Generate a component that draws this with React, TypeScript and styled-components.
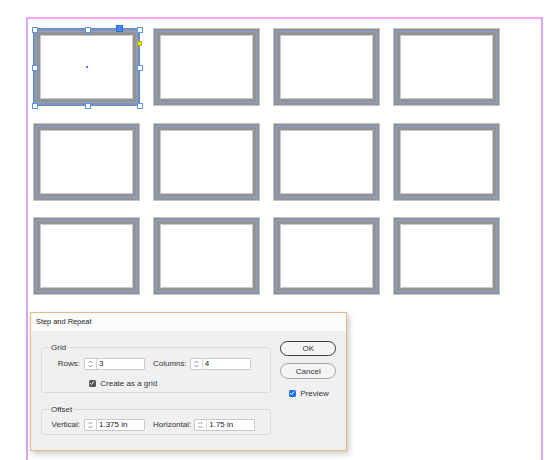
import styled, { createGlobalStyle } from "styled-components";

const GlobalStyle = createGlobalStyle`
  html, body {
    margin: 0;
    padding: 0;
    background: #ffffff;
    font-family: "Liberation Sans", Arial, sans-serif;
  }
`;

const Stage = styled.div`
  position: relative;
  width: 550px;
  height: 460px;
  overflow: hidden;
  background: #ffffff;
`;

const Page = styled.div`
  box-sizing: border-box;
  margin: 17px 0 0 26px;
  width: 517px;
  height: 443px;
  border-top: 2px solid #f9a2f9;
  border-left: 2px solid #d4a8f6;
  border-right: 2px solid #d4a8f6;
  padding: 9px 0 0 5px;
`;

const FrameGrid = styled.div`
  display: grid;
  grid-template-columns: repeat(4, 107px);
  grid-auto-rows: 78px;
  column-gap: 13px;
  row-gap: 16.5px;
`;

const Frame = styled.div<{ $selected?: boolean }>`
  position: relative;
  box-sizing: border-box;
  background: #939393;
  border: 1px solid ${(p) => (p.$selected ? "#4d8ef0" : "#c2c2c2")};
  padding: 2px;
`;

const Bleed = styled.div`
  box-sizing: border-box;
  height: 100%;
  border: 1px solid #7fa3da;
  padding: 3px;
`;

const Picture = styled.div`
  box-sizing: border-box;
  height: 100%;
  background: #ffffff;
  border: 1px solid #c8c8c8;
`;

const Handle = styled.span<{ $x: string; $y: string }>`
  position: absolute;
  left: ${(p) => p.$x};
  top: ${(p) => p.$y};
  width: 4px;
  height: 4px;
  margin: -3px 0 0 -3px;
  background: #ffffff;
  border: 1px solid #5a95ee;
`;

const AnchorHandle = styled.span`
  position: absolute;
  left: 82px;
  top: -4px;
  width: 5px;
  height: 5px;
  background: #3f86ee;
  border: 1px solid #2f6fd0;
`;

const CornerHandle = styled.span`
  position: absolute;
  right: -3px;
  top: 12px;
  width: 3px;
  height: 3px;
  background: #ffe400;
  border: 1px solid #b8a800;
`;

const CenterDot = styled.span`
  position: absolute;
  left: 52px;
  top: 37px;
  width: 2px;
  height: 2px;
  background: #3f86ee;
`;

const Dialog = styled.div`
  position: absolute;
  left: 30px;
  top: 312px;
  box-sizing: border-box;
  width: 317px;
  height: 139px;
  border: 1px solid #e6b88c;
  background: #f0f0f0;
  box-shadow: 2px 3px 6px rgba(0, 0, 0, 0.22);
  color: #333333;
  font-size: 8px;
`;

const TitleBar = styled.div`
  height: 18px;
  line-height: 18px;
  padding-left: 5px;
  background: #fbfbfb;
  font-size: 7.4px;
  color: #222222;
`;

const Body = styled.div`
  display: flex;
  padding: 0 10px 0 10px;
`;

const LeftColumn = styled.div`
  display: flex;
  flex-direction: column;
  padding-top: 11.7px;
  gap: 12px;
`;

const Group = styled.fieldset<{ $bottom: number; $top: number }>`
  box-sizing: border-box;
  margin: 0;
  width: 230px;
  min-width: 0;
  border: 1px solid #dadada;
  border-radius: 3px;
  padding: ${(p) => p.$top}px 0 ${(p) => p.$bottom}px 8px;
  display: flex;
  flex-direction: column;
  gap: 8px;
`;

const Legend = styled.legend`
  padding: 0 1px;
  margin: 0;
  font-size: 8px;
  line-height: 10px;
  color: #333333;
`;

const FieldRow = styled.div`
  display: flex;
  align-items: center;
  height: 12.4px;
`;

const Label = styled.span<{ $fixed?: boolean }>`
  ${(p) => (p.$fixed ? "width: 30px; text-align: right; margin-right: 4px;" : "margin: 0 3px 0 8px;")}
  font-size: 8px;
  line-height: 10px;
  white-space: nowrap;
`;

const SpinBox = styled.div`
  box-sizing: border-box;
  display: flex;
  width: 61px;
  height: 12.4px;
  background: #ffffff;
  border: 1px solid #c9c9c9;
  border-radius: 1px;
`;

const Arrows = styled.div`
  width: 11px;
  border-right: 1px solid #d4d4d4;
  display: flex;
  align-items: center;
  justify-content: center;
`;

const Value = styled.span`
  padding-left: 2px;
  font-size: 8px;
  line-height: 10.4px;
  color: #222222;
`;

const CheckRow = styled.label<{ $indent: number }>`
  display: flex;
  align-items: center;
  gap: 4.7px;
  padding-left: ${(p) => p.$indent}px;
  height: 10px;
  font-size: 8px;
  color: #333333;
`;

const Box = styled.span<{ $color: string }>`
  width: 7px;
  height: 7px;
  border-radius: 1.5px;
  background: ${(p) => p.$color};
  display: flex;
  align-items: center;
  justify-content: center;
`;

const RightColumn = styled.div`
  display: flex;
  flex-direction: column;
  margin-left: 9.3px;
  padding-top: 10px;
`;

const Button = styled.button<{ $primary?: boolean }>`
  box-sizing: border-box;
  width: 56px;
  height: ${(p) => (p.$primary ? 15 : 16)}px;
  padding: 0;
  margin-bottom: ${(p) => (p.$primary ? 7.3 : 9)}px;
  border-radius: 8px;
  border: ${(p) => (p.$primary ? "1.4px solid #3a3a3a" : "1px solid #a6a6a6")};
  background: #f5f5f5;
  font-family: "Liberation Sans", Arial, sans-serif;
  font-size: 8px;
  color: #333333;
`;

function Spinner({ value }: { value: string }) {
  return (
    <SpinBox>
      <Arrows>
        <svg width="7" height="10" viewBox="0 0 7 10">
          <path d="M1.5 4 L3.5 2 L5.5 4" fill="none" stroke="#7a7a7a" strokeWidth="0.8" />
          <path d="M1.5 6 L3.5 8 L5.5 6" fill="none" stroke="#7a7a7a" strokeWidth="0.8" />
        </svg>
      </Arrows>
      <Value>{value}</Value>
    </SpinBox>
  );
}

function Check() {
  return (
    <svg width="6" height="6" viewBox="0 0 6 6">
      <path d="M1 3.1 L2.4 4.5 L5 1.5" fill="none" stroke="#ffffff" strokeWidth="1" />
    </svg>
  );
}

const handles: [string, string][] = [
  ["0px", "0px"],
  ["50%", "0px"],
  ["100%", "0px"],
  ["0px", "50%"],
  ["100%", "50%"],
  ["0px", "100%"],
  ["50%", "100%"],
  ["100%", "100%"],
];

export default function App() {
  return (
    <Stage>
      <GlobalStyle />
      <Page>
        <FrameGrid>
          {Array.from({ length: 12 }).map((_, i) => (
            <Frame key={i} $selected={i === 0}>
              <Bleed>
                <Picture />
              </Bleed>
              {i === 0 && (
                <>
                  {handles.map(([x, y]) => (
                    <Handle key={x + y} $x={`calc(${x} + 1px)`} $y={`calc(${y} + 1px)`} />
                  ))}
                  <AnchorHandle />
                  <CornerHandle />
                  <CenterDot />
                </>
              )}
            </Frame>
          ))}
        </FrameGrid>
      </Page>

      <Dialog>
        <TitleBar>Step and Repeat</TitleBar>
        <Body>
          <LeftColumn>
            <Group $top={5} $bottom={3.6}>
              <Legend>Grid</Legend>
              <FieldRow>
                <Label $fixed>Rows:</Label>
                <Spinner value="3" />
                <Label>Columns:</Label>
                <Spinner value="4" />
              </FieldRow>
              <CheckRow $indent={38.6}>
                <Box $color="#555555">
                  <Check />
                </Box>
                Create as a grid
              </CheckRow>
            </Group>
            <Group $top={4} $bottom={2.6}>
              <Legend>Offset</Legend>
              <FieldRow>
                <Label $fixed>Vertical:</Label>
                <Spinner value="1.375 in" />
                <Label>Horizontal:</Label>
                <Spinner value="1.75 in" />
              </FieldRow>
            </Group>
          </LeftColumn>
          <RightColumn>
            <Button $primary>OK</Button>
            <Button>Cancel</Button>
            <CheckRow $indent={8.3}>
              <Box $color="#1a73e8">
                <Check />
              </Box>
              Preview
            </CheckRow>
          </RightColumn>
        </Body>
      </Dialog>
    </Stage>
  );
}
